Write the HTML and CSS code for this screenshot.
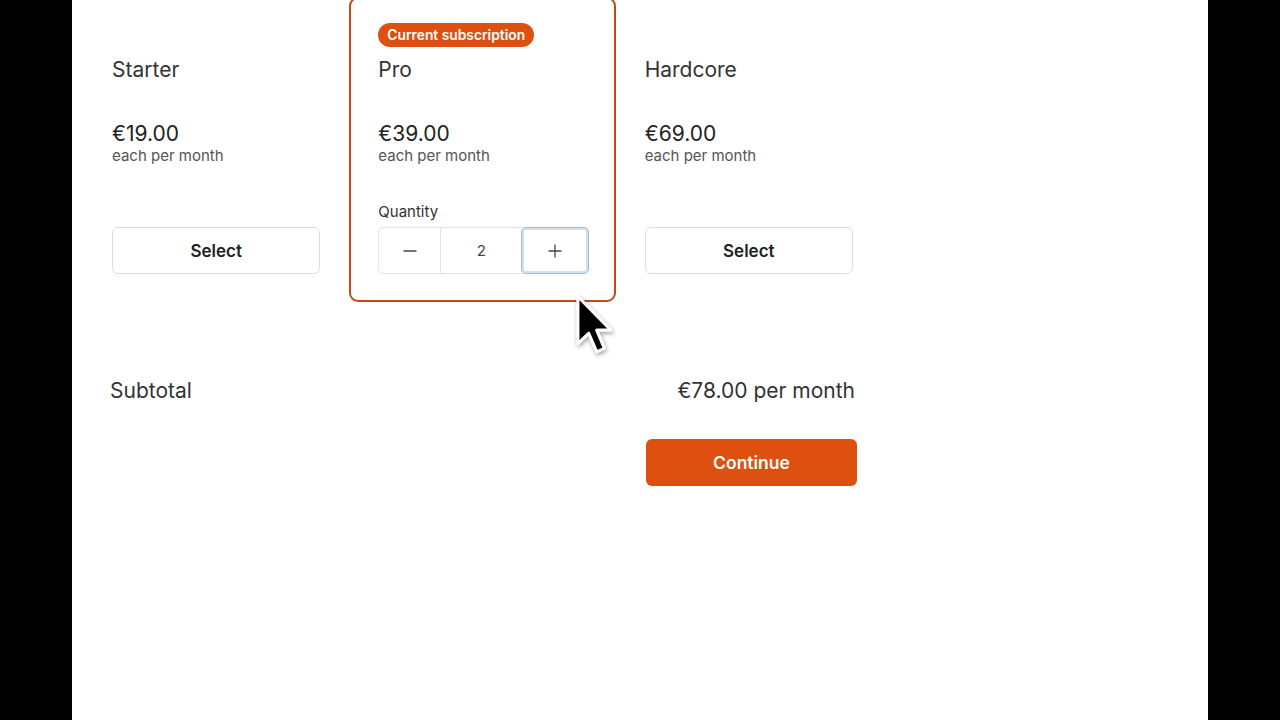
FILE: index.html
```html
<!DOCTYPE html>
<html lang="en">
<head>
  <meta charset="UTF-8">
  <meta name="viewport" content="width=device-width, initial-scale=1.0">
  <title>Choose a plan</title>
  <link rel="stylesheet" href="styles.css">
</head>
<body>
  <div class="frame">
    <main class="panel">
      <div class="checkout">
        <!-- Plans -->
        <div class="plans">
          <div class="plan">
            <div class="plan-top"></div>
            <div class="plan-name">Starter</div>
            <div class="plan-price">€19.00</div>
            <div class="plan-period">each per month</div>
            <div class="plan-action">
              <button class="select-btn">Select</button>
            </div>
          </div>

          <div class="plan current">
            <div class="plan-top">
              <span class="badge">Current subscription</span>
            </div>
            <div class="plan-name">Pro</div>
            <div class="plan-price">€39.00</div>
            <div class="plan-period">each per month</div>
            <div class="plan-action">
              <div class="qty-label">Quantity</div>
              <div class="stepper">
                <button class="step-btn minus" aria-label="Decrease">
                  <svg width="14" height="14" viewBox="0 0 14 14"><path d="M1 7H13" stroke="#444" stroke-width="1.3" stroke-linecap="round"/></svg>
                </button>
                <div class="step-value">2</div>
                <button class="step-btn plus focused" aria-label="Increase">
                  <svg width="14" height="14" viewBox="0 0 14 14"><path d="M1 7H13M7 1V13" stroke="#444" stroke-width="1.3" stroke-linecap="round"/></svg>
                </button>
              </div>
            </div>
          </div>

          <div class="plan">
            <div class="plan-top"></div>
            <div class="plan-name">Hardcore</div>
            <div class="plan-price">€69.00</div>
            <div class="plan-period">each per month</div>
            <div class="plan-action">
              <button class="select-btn">Select</button>
            </div>
          </div>
        </div>

        <!-- Summary -->
        <div class="subtotal">
          <span>Subtotal</span>
          <span>€78.00 per month</span>
        </div>
        <div class="actions">
          <button class="continue-btn">Continue</button>
        </div>
      </div>

      <!-- Mouse pointer -->
      <svg class="pointer" width="40" height="64" viewBox="0 0 14 22">
        <path d="M1 1 L1 17.5 L4.8 13.9 L7.6 20.4 L10.3 19.2 L7.6 12.8 L12.6 12.8 Z" fill="#000" stroke="#fff" stroke-width="1.1" stroke-linejoin="round"/>
      </svg>
    </main>
  </div>
</body>
</html>
```

FILE: styles.css
```css
/* Reset and base styles */
* {
  margin: 0;
  padding: 0;
  box-sizing: border-box;
}

html, body {
  height: 100%;
}

body {
  font-family: Inter, "Noto Sans", "Liberation Sans", sans-serif;
  color: #333;
  background-color: #000;
  overflow: hidden;
}

button {
  font-family: inherit;
  cursor: pointer;
}

/* Page frame */
.frame {
  height: 100%;
  padding: 0 72px;
}

.panel {
  position: relative;
  display: flow-root;
  height: 100%;
  background-color: #fff;
  padding: 0 38px;
}

.checkout {
  width: 746px;
}

/* Plans */
.plans {
  display: grid;
  grid-template-columns: repeat(3, minmax(0, 1fr));
  margin: -3px -26px 0 -27px;
}

.plan {
  display: flex;
  flex-direction: column;
  padding: 24px 27px 26px;
  border: 2px solid transparent;
  border-radius: 9px;
}

.plan.current {
  border-color: #c24a17;
}

.plan-top {
  height: 24px;
  margin-bottom: 9px;
}

.badge {
  display: inline-block;
  height: 24px;
  line-height: 24px;
  padding: 0 9px;
  border-radius: 12px;
  background-color: #de500f;
  color: #fff;
  font-size: 13.8px;
  font-weight: 600;
}

.plan-name {
  font-size: 21px;
  line-height: 28px;
  color: #333;
}

.plan-price {
  margin-top: 38px;
  font-size: 21px;
  line-height: 24px;
  color: #222;
}

.plan-period {
  font-size: 15px;
  line-height: 20px;
  color: #555;
}

.plan-action {
  margin-top: auto;
  padding-top: 36px;
}

.select-btn {
  width: 100%;
  height: 47px;
  border: 1px solid #ddd;
  border-radius: 6px;
  background-color: #fff;
  color: #222;
  font-size: 17px;
  font-weight: 600;
}

/* Quantity stepper */
.qty-label {
  font-size: 15px;
  line-height: 20px;
  margin-bottom: 5px;
  color: #333;
}

.stepper {
  display: flex;
  width: 211px;
  height: 47px;
  border: 1px solid #e3e3e3;
  border-radius: 5px;
}

.step-btn {
  display: flex;
  align-items: center;
  justify-content: center;
  border: none;
  background-color: #fff;
}

.step-btn.minus {
  width: 62px;
  border-right: 1px solid #e3e3e3;
  border-radius: 5px 0 0 5px;
}

.step-value {
  width: 80px;
  display: flex;
  align-items: center;
  justify-content: center;
  font-size: 15px;
  color: #444;
}

.step-btn.plus {
  flex: 1;
  border-radius: 5px;
}

.step-btn.focused {
  margin: -1px -1px -1px 0;
  border: 1px solid #9fbdd8;
  box-shadow: inset 0 0 0 2px #cfe0ef;
}

/* Summary */
.subtotal {
  display: flex;
  justify-content: space-between;
  margin-top: 75px;
  font-size: 21px;
  line-height: 28px;
  color: #333;
}

.subtotal span:last-child {
  margin-right: 1px;
}

.actions {
  display: flex;
  justify-content: flex-end;
  margin-top: 34px;
}

.continue-btn {
  width: 211px;
  height: 47px;
  margin-right: -1px;
  border: none;
  border-radius: 6px;
  background-color: #de500f;
  color: #fff;
  font-size: 17.5px;
  font-weight: 600;
}

/* Mouse pointer */
.pointer {
  position: absolute;
  left: 503px;
  top: 293px;
  filter: drop-shadow(1px 2px 2px rgba(0, 0, 0, 0.35));
}
```
